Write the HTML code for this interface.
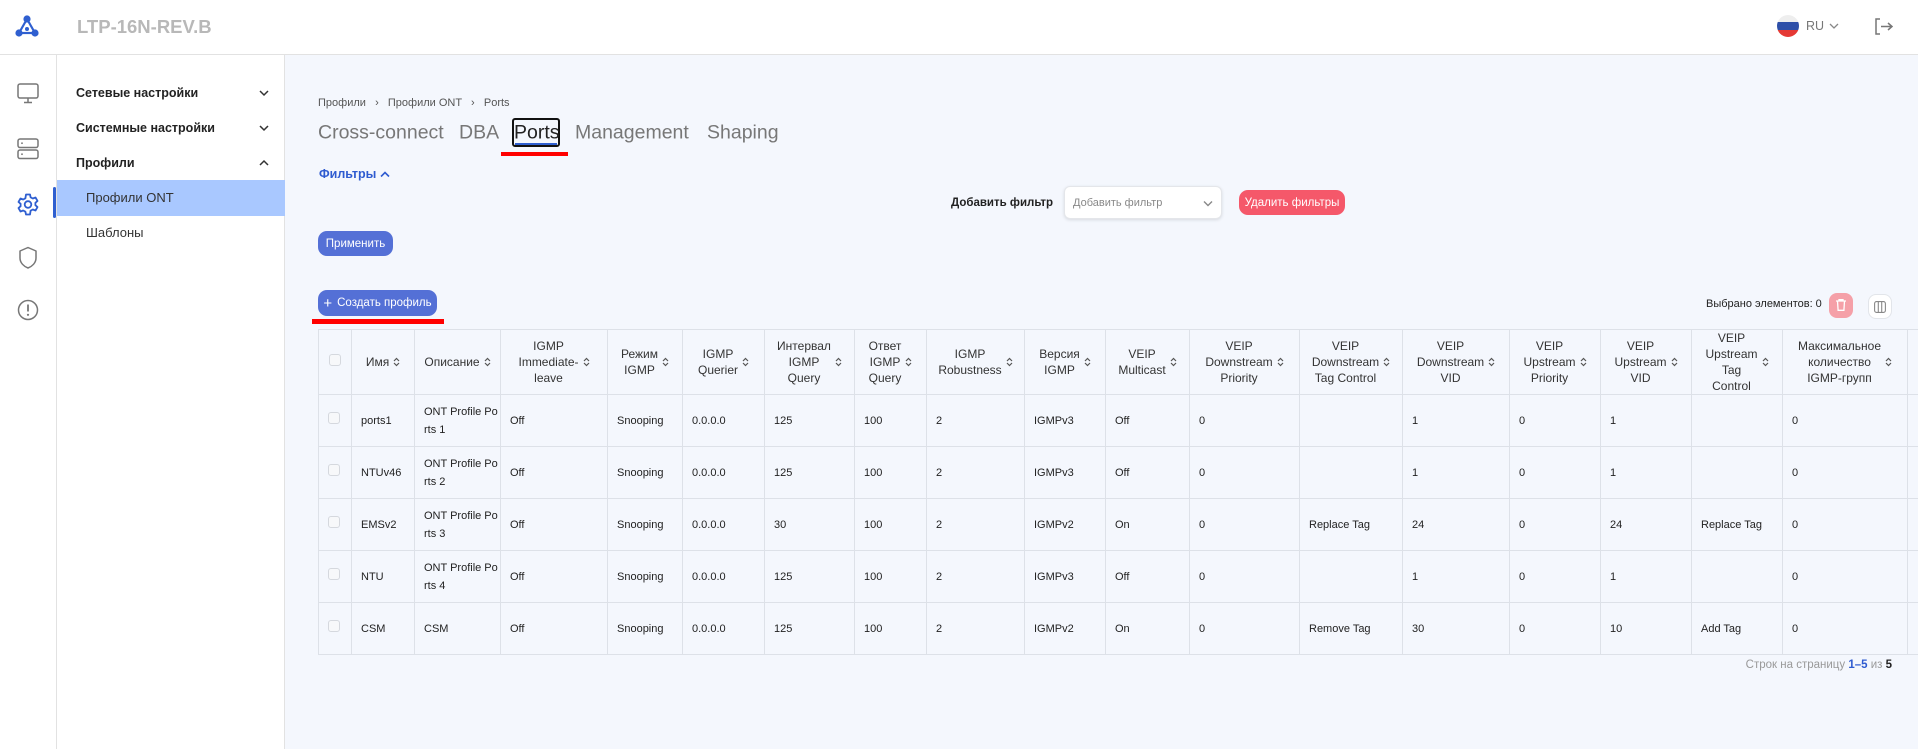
<!DOCTYPE html>
<html><head><meta charset="utf-8">
<style>
*{box-sizing:border-box;margin:0;padding:0}
body{width:1918px;height:749px;overflow:hidden;background:#f4f7fd;font-family:"Liberation Sans","Noto Sans CJK SC",sans-serif;position:relative;color:#222}
.abs{position:absolute}
#hdr{left:0;top:0;width:1918px;height:55px;background:#fff;border-bottom:1px solid #e2e2e2}
#rail{left:0;top:55px;width:57px;height:694px;background:#fff;border-right:1px solid #e2e2e2}
#menu{left:57px;top:55px;width:228px;height:694px;background:#fff;border-right:1px solid #e2e2e2}
.mi{position:absolute;left:19px;font-size:12.5px;font-weight:bold;color:#222;transform:translateY(-50%)}
.chev{position:absolute;left:202px;transform:translateY(-50%)}
.tab{position:absolute;top:133px;transform:translateY(-50%);font-size:19.5px;color:#777;white-space:nowrap}
table{border-collapse:collapse;table-layout:fixed;font-size:11px;color:#222}
td,th{border:1px solid #dde1e8}
th{font-weight:normal;height:65px;text-align:center;line-height:16px;padding:0 4px;color:#333;font-size:12px}
td{height:52px;padding:0 9px;line-height:18px}
td.d{padding:0 2px 0 9px}
.s{display:inline-block;vertical-align:middle;margin-left:4px}
.hc{display:flex;align-items:center;justify-content:center}
.cb{display:inline-block;width:12px;height:12px;border:1px solid #d5d8de;border-radius:3px;background:#f7f8fa}
.btn{position:absolute;background:#5470d6;color:#fff;border-radius:9px;font-size:11.5px;display:flex;align-items:center;justify-content:center}
</style></head><body>
<div id="hdr" class="abs">
 <svg class="abs" style="left:14px;top:14px" width="26" height="26" viewBox="0 0 26 26"><g stroke="#2f5fd0" stroke-width="2.2"><line x1="13" y1="5" x2="5" y2="19"/><line x1="13" y1="5" x2="21" y2="19"/><line x1="5" y1="19" x2="21" y2="19"/></g><circle cx="13" cy="5" r="3.6" fill="#2f5fd0"/><circle cx="5" cy="19" r="3.6" fill="#2f5fd0"/><circle cx="21" cy="19" r="3.6" fill="#2f5fd0"/><circle cx="13" cy="15" r="2" fill="#2f5fd0"/></svg>
 <div class="abs" style="left:77px;top:16px;font-size:18.5px;font-weight:bold;color:#b8b8b8">LTP-16N-REV.B</div>
 <div class="abs" style="left:1777px;top:15px;width:22px;height:22px;border-radius:50%;overflow:hidden"><div style="height:7px;background:#eee"></div><div style="height:8px;background:#2e4fa8"></div><div style="height:7px;background:#e53935"></div></div>
 <div class="abs" style="left:1806px;top:19px;font-size:12.5px;color:#777">RU</div>
 <svg class="abs" style="left:1829px;top:22px" width="10" height="8" viewBox="0 0 10 8"><path d="M1 2l4 4 4-4" fill="none" stroke="#888" stroke-width="1.3"/></svg>
 <svg class="abs" style="left:1874px;top:18px" width="20" height="17" viewBox="0 0 20 17"><path d="M6 1H2v15h4M7 8.5h11M14 5l4 3.5-4 3.5" fill="none" stroke="#777" stroke-width="1.5"/></svg>
</div>
<div id="rail" class="abs">
 <svg class="abs" style="left:17px;top:28px" width="22" height="21" viewBox="0 0 22 21"><rect x="1" y="1" width="20" height="14" rx="2" fill="none" stroke="#777" stroke-width="1.5"/><path d="M11 15v4M7 19.5h8" stroke="#777" stroke-width="1.5"/></svg>
 <svg class="abs" style="left:17px;top:83px" width="22" height="22" viewBox="0 0 22 22"><rect x="1" y="1" width="20" height="8.5" rx="2" fill="none" stroke="#777" stroke-width="1.5"/><rect x="1" y="12" width="20" height="8.5" rx="2" fill="none" stroke="#777" stroke-width="1.5"/><circle cx="5" cy="5.2" r=".9" fill="#777"/><circle cx="5" cy="16.2" r=".9" fill="#777"/></svg>
 <svg class="abs" style="left:16px;top:137px" width="24" height="25" viewBox="0 0 24 24"><path d="M10 2h4l.6 2.8 2.2 1.2 2.7-1 2 3.4-2.1 1.9v2.4l2.1 1.9-2 3.4-2.7-1-2.2 1.2L14 22h-4l-.6-2.8-2.2-1.2-2.7 1-2-3.4 2.1-1.9V11.3L2.5 9.4l2-3.4 2.7 1 2.2-1.2z" fill="none" stroke="#2f5fd0" stroke-width="1.8" stroke-linejoin="round"/><circle cx="12" cy="12" r="3.3" fill="none" stroke="#2f5fd0" stroke-width="1.8"/></svg>
 <div class="abs" style="left:53px;top:132px;width:3px;height:31px;background:#2f5fd0;border-radius:2px"></div>
 <svg class="abs" style="left:18px;top:191px" width="20" height="23" viewBox="0 0 20 23"><path d="M10 1.5l8 3.5v7c0 5-4 8.5-8 10-4-1.5-8-5-8-10V5z" fill="none" stroke="#777" stroke-width="1.5" stroke-linejoin="round"/></svg>
 <svg class="abs" style="left:17px;top:244px" width="22" height="22" viewBox="0 0 22 22"><circle cx="11" cy="11" r="9.5" fill="none" stroke="#777" stroke-width="1.5"/><path d="M11 5.5v7" stroke="#777" stroke-width="1.8"/><circle cx="11" cy="15.8" r="1.1" fill="#777"/></svg>
</div>
<div id="menu" class="abs">
 <div class="mi" style="top:38px">Сетевые настройки</div>
 <svg class="chev" style="top:38px" width="10" height="7" viewBox="0 0 10 7"><path d="M1 1.5l4 4 4-4" fill="none" stroke="#333" stroke-width="1.5"/></svg>
 <div class="mi" style="top:73px">Системные настройки</div>
 <svg class="chev" style="top:73px" width="10" height="7" viewBox="0 0 10 7"><path d="M1 1.5l4 4 4-4" fill="none" stroke="#333" stroke-width="1.5"/></svg>
 <div class="mi" style="top:108px">Профили</div>
 <svg class="chev" style="top:108px" width="10" height="7" viewBox="0 0 10 7"><path d="M1 5.5l4-4 4 4" fill="none" stroke="#333" stroke-width="1.5"/></svg>
 <div class="abs" style="left:0;top:125px;width:228px;height:36px;background:#a9c8ff"></div>
 <div class="abs" style="left:29px;top:135px;font-size:13px;color:#333">Профили ONT</div>
 <div class="abs" style="left:29px;top:170px;font-size:13px;color:#333">Шаблоны</div>
</div>

<div class="abs" style="left:318px;top:97px;font-size:11px;color:#555;white-space:nowrap">Профили &nbsp;&nbsp;›&nbsp;&nbsp; Профили ONT &nbsp;&nbsp;›&nbsp;&nbsp; Ports</div>
<div class="tab" style="left:318px">Cross-connect</div>
<div class="tab" style="left:459px">DBA</div>
<div class="abs" style="left:512px;top:118px;width:48px;height:29px;border:2px solid #111;border-radius:3px"></div>
<div class="abs" style="left:515px;top:143px;width:42px;height:2px;background:#2f5fd0"></div>
<div class="tab" style="left:514px;color:#222">Ports</div>
<div class="tab" style="left:575px">Management</div>
<div class="tab" style="left:707px">Shaping</div>
<div class="abs" style="left:501px;top:152px;width:67px;height:4px;background:#f00"></div>

<div class="abs" style="left:319px;top:167px;font-size:12.5px;font-weight:bold;color:#2e5bd0">Фильтры <svg width="10" height="7" viewBox="0 0 10 7"><path d="M1 5.5l4-4 4 4" fill="none" stroke="#2e5bd0" stroke-width="1.6"/></svg></div>
<div class="abs" style="left:951px;top:197px;font-size:11.5px;font-weight:bold;color:#222">Добавить фильтр</div>
<div class="abs" style="left:1064px;top:186px;width:158px;height:33px;background:#fff;border:1px solid #e4e6ea;border-radius:6px;box-shadow:0 1px 3px rgba(0,0,0,.12)">
 <div class="abs" style="left:8px;top:10px;font-size:11px;color:#888">Добавить фильтр</div>
 <svg class="abs" style="left:138px;top:13px" width="10" height="7" viewBox="0 0 10 7"><path d="M1 1.5l4 4 4-4" fill="none" stroke="#888" stroke-width="1.4"/></svg>
</div>
<div class="btn" style="left:1239px;top:190px;width:106px;height:25px;background:#f5586a">Удалить фильтры</div>
<div class="btn" style="left:318px;top:231px;width:75px;height:25px">Применить</div>
<div class="btn" style="left:318px;top:290px;width:119px;height:26px"><span style="font-size:15px;margin-right:5px">+</span>Создать профиль</div>
<div class="abs" style="left:312px;top:319px;width:132px;height:5px;background:#f00"></div>

<div class="abs" style="left:1706px;top:298px;font-size:11px;color:#222">Выбрано элементов: 0</div>
<div class="abs" style="left:1829px;top:293px;width:24px;height:25px;border-radius:8px;background:#f5a0a8"><svg style="margin:6px 0 0 7px" width="10" height="12" viewBox="0 0 10 12"><path d="M0 2h10M3 2V.7h4V2M1.5 2l.6 9.3h5.8L8.5 2" fill="none" stroke="#fff" stroke-width="1.3"/></svg></div>
<div class="abs" style="left:1868px;top:294px;width:24px;height:25px;border-radius:8px;background:#fff;border:1px solid #e2e5ea"><svg style="margin:6px 0 0 5px" width="12" height="12" viewBox="0 0 12 12"><rect x=".6" y=".6" width="10.8" height="10.8" rx="2" fill="none" stroke="#888" stroke-width="1.1"/><path d="M4.3 1v10M7.7 1v10" stroke="#888" stroke-width="1.1"/></svg></div>

<div class="abs" style="left:318px;top:329px;width:1600px;overflow:hidden">
<table style="width:1800px">
<colgroup><col style="width:33px"><col style="width:63px"><col style="width:86px"><col style="width:107px"><col style="width:75px"><col style="width:82px"><col style="width:90px"><col style="width:72px"><col style="width:98px"><col style="width:81px"><col style="width:84px"><col style="width:110px"><col style="width:103px"><col style="width:107px"><col style="width:91px"><col style="width:91px"><col style="width:91px"><col style="width:125px"><col style="width:210px"></colgroup>
<tr>
<th><span class="cb"></span></th>
<th><div class="hc">Имя<svg class="s" width="7" height="10" viewBox="0 0 7 10"><path d="M1 4l2.5-2.5L6 4M1 6l2.5 2.5L6 6" fill="none" stroke="#555" stroke-width="1.2"/></svg></div></th>
<th><div class="hc">Описание<svg class="s" width="7" height="10" viewBox="0 0 7 10"><path d="M1 4l2.5-2.5L6 4M1 6l2.5 2.5L6 6" fill="none" stroke="#555" stroke-width="1.2"/></svg></div></th>
<th><div class="hc"><span>IGMP<br>Immediate-<br>leave</span><svg class="s" width="7" height="10" viewBox="0 0 7 10"><path d="M1 4l2.5-2.5L6 4M1 6l2.5 2.5L6 6" fill="none" stroke="#555" stroke-width="1.2"/></svg></div></th>
<th><div class="hc"><span>Режим<br>IGMP</span><svg class="s" width="7" height="10" viewBox="0 0 7 10"><path d="M1 4l2.5-2.5L6 4M1 6l2.5 2.5L6 6" fill="none" stroke="#555" stroke-width="1.2"/></svg></div></th>
<th><div class="hc"><span>IGMP<br>Querier</span><svg class="s" width="7" height="10" viewBox="0 0 7 10"><path d="M1 4l2.5-2.5L6 4M1 6l2.5 2.5L6 6" fill="none" stroke="#555" stroke-width="1.2"/></svg></div></th>
<th><div class="hc"><span>Интервал<br>IGMP<br>Query</span><svg class="s" width="7" height="10" viewBox="0 0 7 10"><path d="M1 4l2.5-2.5L6 4M1 6l2.5 2.5L6 6" fill="none" stroke="#555" stroke-width="1.2"/></svg></div></th>
<th><div class="hc"><span>Ответ<br>IGMP<br>Query</span><svg class="s" width="7" height="10" viewBox="0 0 7 10"><path d="M1 4l2.5-2.5L6 4M1 6l2.5 2.5L6 6" fill="none" stroke="#555" stroke-width="1.2"/></svg></div></th>
<th><div class="hc"><span>IGMP<br>Robustness</span><svg class="s" width="7" height="10" viewBox="0 0 7 10"><path d="M1 4l2.5-2.5L6 4M1 6l2.5 2.5L6 6" fill="none" stroke="#555" stroke-width="1.2"/></svg></div></th>
<th><div class="hc"><span>Версия<br>IGMP</span><svg class="s" width="7" height="10" viewBox="0 0 7 10"><path d="M1 4l2.5-2.5L6 4M1 6l2.5 2.5L6 6" fill="none" stroke="#555" stroke-width="1.2"/></svg></div></th>
<th><div class="hc"><span>VEIP<br>Multicast</span><svg class="s" width="7" height="10" viewBox="0 0 7 10"><path d="M1 4l2.5-2.5L6 4M1 6l2.5 2.5L6 6" fill="none" stroke="#555" stroke-width="1.2"/></svg></div></th>
<th><div class="hc"><span>VEIP<br>Downstream<br>Priority</span><svg class="s" width="7" height="10" viewBox="0 0 7 10"><path d="M1 4l2.5-2.5L6 4M1 6l2.5 2.5L6 6" fill="none" stroke="#555" stroke-width="1.2"/></svg></div></th>
<th><div class="hc"><span>VEIP<br>Downstream<br>Tag Control</span><svg class="s" width="7" height="10" viewBox="0 0 7 10"><path d="M1 4l2.5-2.5L6 4M1 6l2.5 2.5L6 6" fill="none" stroke="#555" stroke-width="1.2"/></svg></div></th>
<th><div class="hc"><span>VEIP<br>Downstream<br>VID</span><svg class="s" width="7" height="10" viewBox="0 0 7 10"><path d="M1 4l2.5-2.5L6 4M1 6l2.5 2.5L6 6" fill="none" stroke="#555" stroke-width="1.2"/></svg></div></th>
<th><div class="hc"><span>VEIP<br>Upstream<br>Priority</span><svg class="s" width="7" height="10" viewBox="0 0 7 10"><path d="M1 4l2.5-2.5L6 4M1 6l2.5 2.5L6 6" fill="none" stroke="#555" stroke-width="1.2"/></svg></div></th>
<th><div class="hc"><span>VEIP<br>Upstream<br>VID</span><svg class="s" width="7" height="10" viewBox="0 0 7 10"><path d="M1 4l2.5-2.5L6 4M1 6l2.5 2.5L6 6" fill="none" stroke="#555" stroke-width="1.2"/></svg></div></th>
<th><div class="hc"><span>VEIP<br>Upstream<br>Tag<br>Control</span><svg class="s" width="7" height="10" viewBox="0 0 7 10"><path d="M1 4l2.5-2.5L6 4M1 6l2.5 2.5L6 6" fill="none" stroke="#555" stroke-width="1.2"/></svg></div></th>
<th><div class="hc"><span>Максимальное<br>количество<br>IGMP-групп</span><svg class="s" width="7" height="10" viewBox="0 0 7 10"><path d="M1 4l2.5-2.5L6 4M1 6l2.5 2.5L6 6" fill="none" stroke="#555" stroke-width="1.2"/></svg></div></th>
<th></th>
</tr>
<tr><td><span class="cb"></span></td><td>ports1</td><td class="d">ONT Profile Po<br>rts 1</td><td>Off</td><td>Snooping</td><td>0.0.0.0</td><td>125</td><td>100</td><td>2</td><td>IGMPv3</td><td>Off</td><td>0</td><td></td><td>1</td><td>0</td><td>1</td><td></td><td>0</td><td></td></tr>
<tr><td><span class="cb"></span></td><td>NTUv46</td><td class="d">ONT Profile Po<br>rts 2</td><td>Off</td><td>Snooping</td><td>0.0.0.0</td><td>125</td><td>100</td><td>2</td><td>IGMPv3</td><td>Off</td><td>0</td><td></td><td>1</td><td>0</td><td>1</td><td></td><td>0</td><td></td></tr>
<tr><td><span class="cb"></span></td><td>EMSv2</td><td class="d">ONT Profile Po<br>rts 3</td><td>Off</td><td>Snooping</td><td>0.0.0.0</td><td>30</td><td>100</td><td>2</td><td>IGMPv2</td><td>On</td><td>0</td><td>Replace Tag</td><td>24</td><td>0</td><td>24</td><td>Replace Tag</td><td>0</td><td></td></tr>
<tr><td><span class="cb"></span></td><td>NTU</td><td class="d">ONT Profile Po<br>rts 4</td><td>Off</td><td>Snooping</td><td>0.0.0.0</td><td>125</td><td>100</td><td>2</td><td>IGMPv3</td><td>Off</td><td>0</td><td></td><td>1</td><td>0</td><td>1</td><td></td><td>0</td><td></td></tr>
<tr><td><span class="cb"></span></td><td>CSM</td><td class="d">CSM</td><td>Off</td><td>Snooping</td><td>0.0.0.0</td><td>125</td><td>100</td><td>2</td><td>IGMPv2</td><td>On</td><td>0</td><td>Remove Tag</td><td>30</td><td>0</td><td>10</td><td>Add Tag</td><td>0</td><td></td></tr>
</table>
</div>
<div class="abs" style="left:1650px;top:659px;width:242px;text-align:right;font-size:11.5px;color:#999">Строк на страницу <b style="color:#2e5bd0">1–5</b> из <b style="color:#222">5</b></div>
</body></html>
